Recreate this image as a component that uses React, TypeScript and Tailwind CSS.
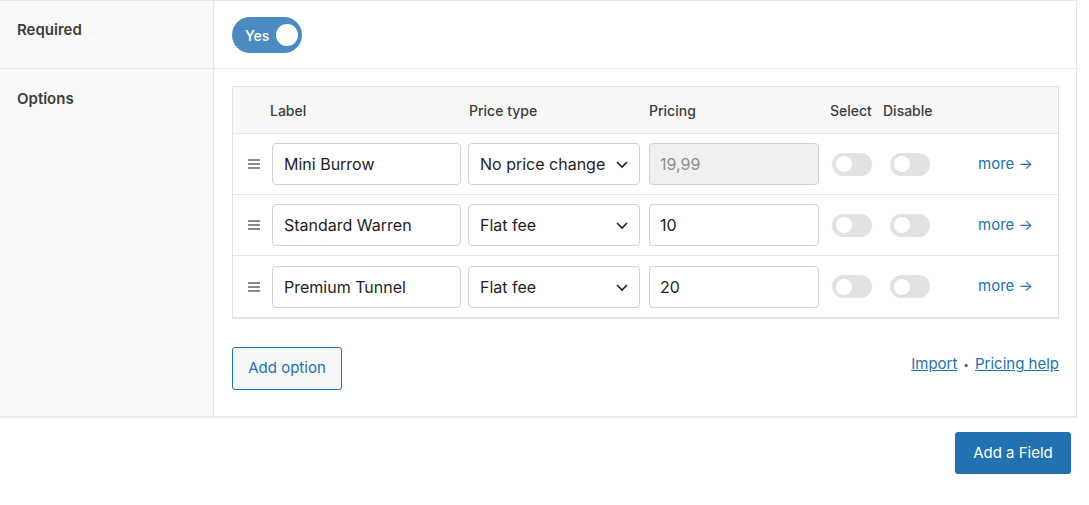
import React from "react";

const Toggle = () => (
  <div className="w-[40px] h-[23px] rounded-full bg-[#e2e2e2] flex items-center px-[4px]">
    <div className="w-[16px] h-[16px] rounded-full bg-white" />
  </div>
);

const Chevron = () => (
  <svg width="14" height="14" viewBox="0 0 14 14" fill="none" stroke="#1e1e1e" strokeWidth="1.6"><path d="M2 5l5 5 5-5" /></svg>
);

const rows = [
  { label: "Mini Burrow", type: "No price change", price: "19,99", disabled: true },
  { label: "Standard Warren", type: "Flat fee", price: "10" },
  { label: "Premium Tunnel", type: "Flat fee", price: "20" },
];

export default function App() {
  return (
    <div className="w-[1089px] h-[505px] bg-white text-[#1e1e1e]" style={{ fontFamily: "Inter, 'Noto Sans', sans-serif" }}>
      <div className="w-[1077px] border-r border-t border-[#e8e8e8] border-b-2">
        <div className="flex h-[68px] border-b border-[#e8e8e8]">
          <div className="w-[214px] shrink-0 bg-[#f9f9f9] border-r border-[#e8e8e8] pl-[17px] pt-[18px] text-[15px] font-semibold text-[#3c3c3c]">Required</div>
          <div className="pl-[18px] pt-[16px]">
            <div className="w-[70px] h-[36px] rounded-full bg-[#4c8bc2] flex items-center justify-between pl-[13px] pr-[4px]">
              <span className="text-white text-[14px] font-medium">Yes</span>
              <div className="w-[22px] h-[22px] rounded-full bg-white" />
            </div>
          </div>
        </div>
        <div className="flex h-[347px]">
          <div className="w-[214px] shrink-0 bg-[#f9f9f9] border-r border-[#e8e8e8] pl-[17px] pt-[19px] text-[15px] font-semibold text-[#3c3c3c]">Options</div>
          <div className="pl-[18px] pt-[17px] w-[845px]">
            <div className="border border-[#e2e2e2] border-b-2">
              <div className="h-[47px] bg-[#f8f8f8] border-b border-[#e8e8e8] flex items-center text-[14px] font-medium text-[#3c3c3c]">
                <div className="w-[37px]" />
                <div className="w-[199px]">Label</div>
                <div className="w-[180px]">Price type</div>
                <div className="w-[181px]">Pricing</div>
                <div className="w-[53px]">Select</div>
                <div>Disable</div>
              </div>
              {rows.map((r, i) => (
                <div key={i} className={`h-[61px] flex items-center ${i < 2 ? "border-b border-[#e8e8e8]" : ""}`}>
                  <div className="w-[39px] flex justify-center pl-[2px]">
                    <svg width="14" height="12" viewBox="0 0 14 12" stroke="#666" strokeWidth="1.6"><path d="M1 2h12M1 6h12M1 10h12" /></svg>
                  </div>
                  <div className="w-[189px] h-[42px] border border-[#cfd1da] rounded-[4px] flex items-center px-[11px] text-[16px]">{r.label}</div>
                  <div className="w-[172px] ml-[7px] h-[42px] border border-[#cfd1da] rounded-[4px] flex items-center pl-[11px] pr-[10px] text-[16px] overflow-hidden">
                    <span className="flex-1 whitespace-nowrap overflow-hidden">{r.type}</span>
                    <Chevron />
                  </div>
                  <div className={`w-[170px] ml-[9px] h-[42px] border border-[#cfd1da] rounded-[4px] flex items-center px-[10px] text-[16px] ${r.disabled ? "bg-[#f0f0f1] text-[#8c8c8c]" : ""}`}>{r.price}</div>
                  <div className="ml-[13px]"><Toggle /></div>
                  <div className="ml-[18px]"><Toggle /></div>
                  <div className="ml-[48px] text-[#2271b1] text-[15px]">more →</div>
                </div>
              ))}
            </div>
            <div className="flex items-center justify-between mt-[28px]">
              <button className="h-[43px] w-[110px] border border-[#2271b1] rounded-[3px] bg-[#f6f7f7] text-[#2271b1] text-[15px]">Add option</button>
              <div className="text-[15px] text-[#2271b1] flex items-center gap-[6px] -mt-[8px]">
                <span className="underline">Import</span><span className="text-[#555] text-[10px]">•</span><span className="underline">Pricing help</span>
              </div>
            </div>
          </div>
        </div>
      </div>
      <div className="flex justify-end pr-[18px] pt-[14px]">
        <button className="h-[42px] w-[116px] rounded-[3px] bg-[#2271b1] text-white text-[15px]">Add a Field</button>
      </div>
    </div>
  );
}
